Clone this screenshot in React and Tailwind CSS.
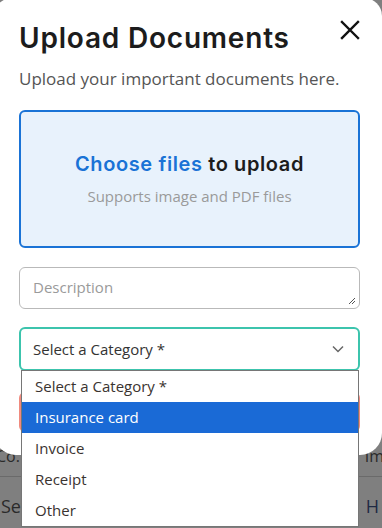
export default function App() {
  const options = ['Select a Category *', 'Insurance card', 'Invoice', 'Receipt', 'Other'];

  return (
    <div className="relative h-[528px] w-[382px] overflow-hidden bg-[#7f7f7f] font-['Open_Sans',sans-serif]">
      {/* page behind the overlay */}
      <div className="flex flex-col pt-[444px] text-[#2a2a2a]">
        <div className="flex h-[32px] items-start justify-between text-[16px]">
          <span className="-ml-[4px]">Co.</span>
          <span className="-mr-[2px]">Im</span>
        </div>
        <div className="h-px bg-[#6a6a6a]" />
        <div className="flex items-start justify-between pt-[16px] text-[18px]">
          <span className="ml-[1px]">Set</span>
          <span className="mr-[3px] text-[#1f2a44]">H</span>
        </div>
      </div>

      {/* modal */}
      <div className="absolute -left-[6px] -top-[2px] w-[388px] rounded-b-[22px] rounded-t-[18px] bg-white pb-[23px] pl-[25px] pr-[22px] pt-[22px]">
        <div className="flex items-start justify-between">
          <h2 className="font-['Inter',sans-serif] text-[28px] font-semibold leading-[36px] tracking-[0.8px] text-[#1c1c1c]">
            Upload Documents
          </h2>
          <svg width="22" height="22" viewBox="0 0 22 22" className="-mr-[1px] mt-[-1px]">
            <path d="M3 3L19 19M19 3L3 19" stroke="#111" strokeWidth="2.4" strokeLinecap="square" />
          </svg>
        </div>
        <p className="mt-[11px] text-[17px] leading-[23px] text-[#555]">Upload your important documents here.</p>

        <div className="mt-[20px] flex h-[138px] flex-col items-center justify-center rounded-[6px] border-2 border-[#1a73d6] bg-[#e8f2fc]">
          <div className="font-['Inter',sans-serif] text-[20px] font-semibold leading-[26px] tracking-[0.6px]">
            <span className="text-[#1a73d6]">Choose files</span> <span className="text-[#1c1c1c]">to upload</span>
          </div>
          <div className="mt-[8px] text-[15px] text-[#9a9a9a]">Supports image and PDF files</div>
        </div>

        <div className="relative mt-[19px] h-[42px] rounded-[6px] border border-[#b9b9b9] px-[13px] pt-[8px] text-[15px] text-[#9a9a9a]">
          Description
          <svg width="8" height="8" viewBox="0 0 8 8" className="absolute bottom-[3px] right-[3px]">
            <path d="M1 7L7 1M4 7L7 4" stroke="#555" strokeWidth="1" />
          </svg>
        </div>

        <div className="relative mt-[18px]">
          <div className="flex h-[44px] items-center justify-between rounded-[6px] border-2 border-[#3cc4ad] pl-[12px] pr-[14px] text-[15px] text-[#333]">
            <span>Select a Category *</span>
            <svg width="12" height="8" viewBox="0 0 12 8">
              <path d="M1 1.5L6 6.5L11 1.5" stroke="#666" strokeWidth="1.5" fill="none" />
            </svg>
          </div>

          <div className="mt-[21px] h-[40px] rounded-[6px] bg-[#f08a7e]" />

          {/* open native-like dropdown */}
          <div className="absolute left-[2px] right-[1px] top-[43px] z-10 border border-[#767676] bg-white">
            {options.map((o, i) => (
              <div
                key={o}
                className={
                  'flex h-[31px] items-center px-[13px] text-[15px] ' +
                  (i === 1 ? 'bg-[#1a6ad6] text-white' : 'text-[#3a3330]')
                }
              >
                {o}
              </div>
            ))}
          </div>
        </div>
      </div>
    </div>
  );
}
